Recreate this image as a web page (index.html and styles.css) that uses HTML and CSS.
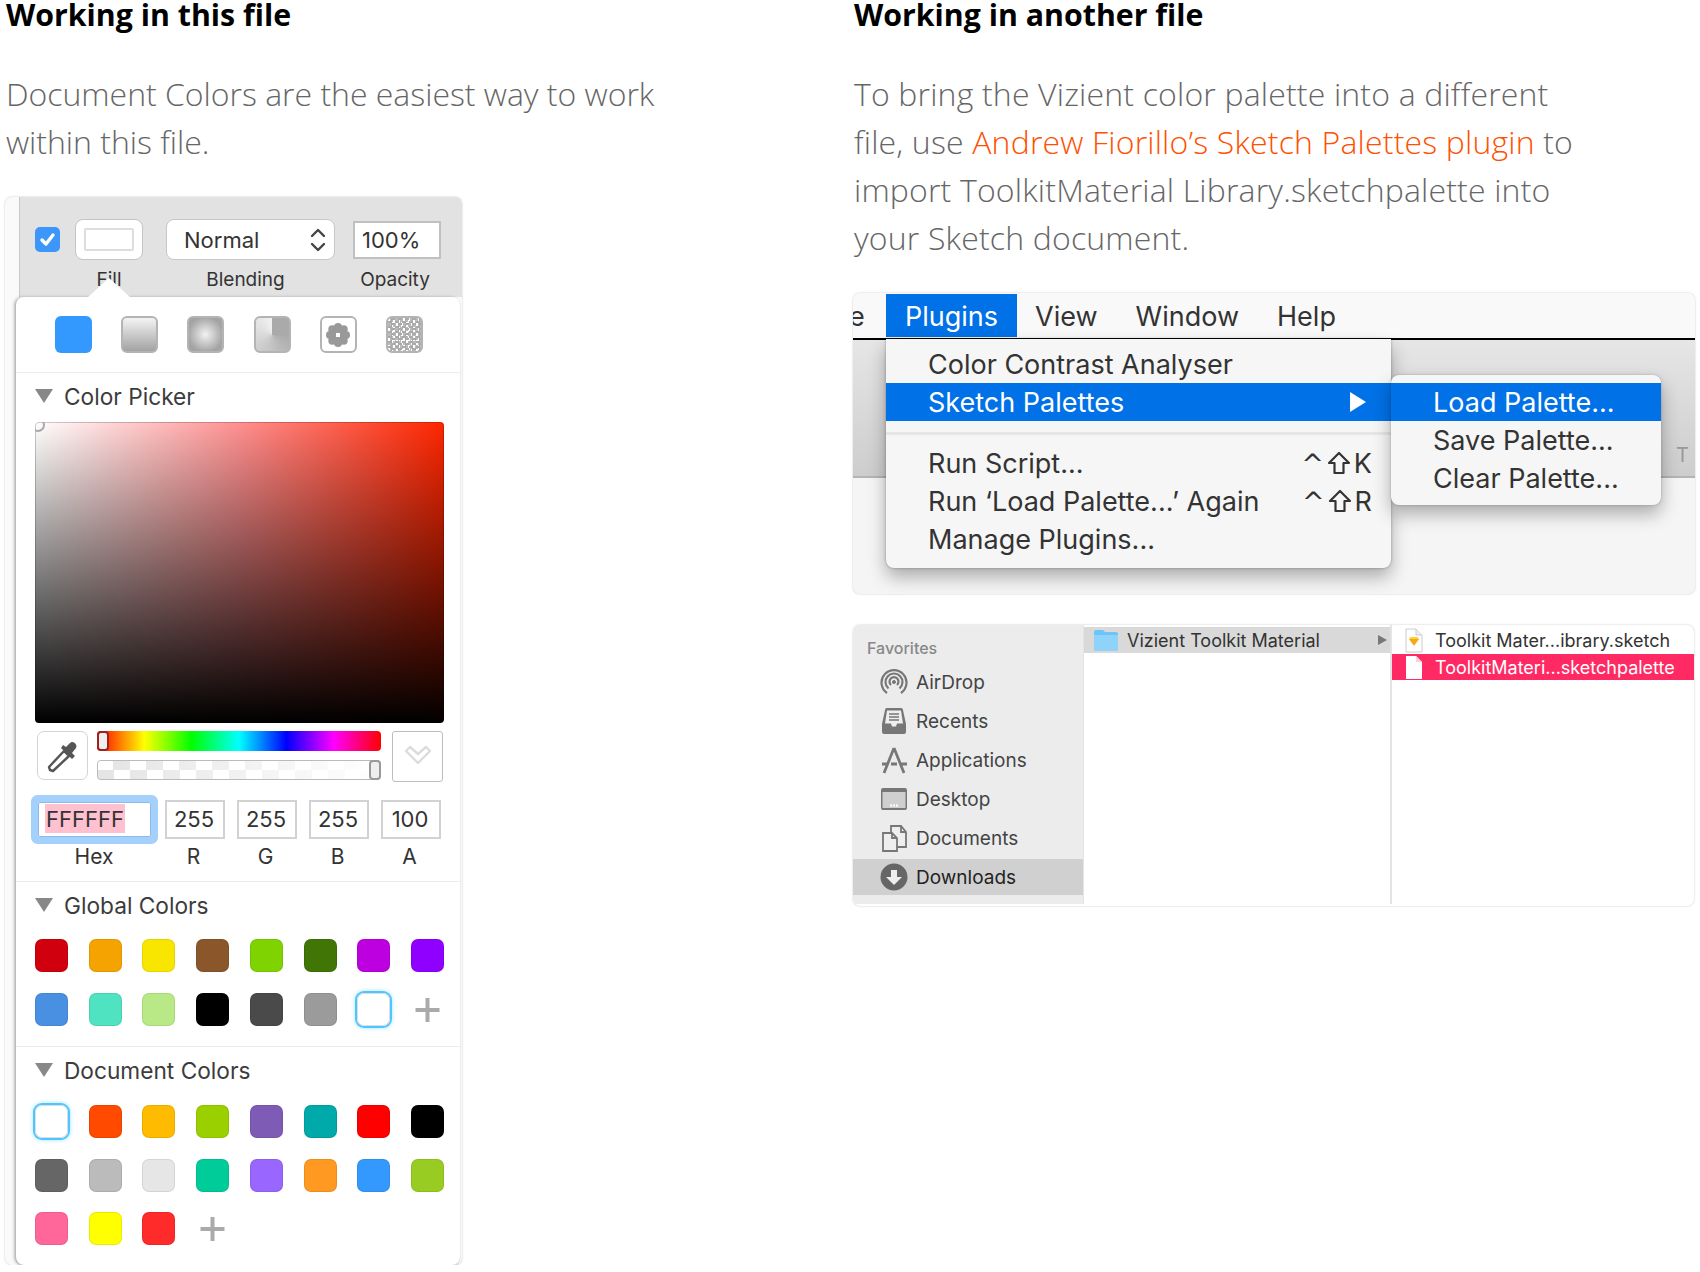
FILE: index.html
```html
<!DOCTYPE html>
<html lang="en">
  <head>
    <meta charset="UTF-8" />
    <title>Working with color palettes</title>
    <link rel="stylesheet" href="styles.css">
  </head>
  <body>
    <div class="page">
      <!-- left column -->
      <section class="col col-left">
        <h2>Working in this file</h2>
        <p>Document Colors are the easiest way to work<br>within this file.</p>

        <div class="inspector">
          <div class="fill-bar">
            <span class="check">
              <svg width="25" height="25" viewBox="0 0 25 25"><path d="M7 13l4 4 7-9" fill="none" stroke="#fff" stroke-width="3.4" stroke-linecap="round" stroke-linejoin="round"/></svg>
            </span>
            <span class="well"><span class="well-inner"></span></span>
            <span class="select">Normal
              <svg width="18" height="26" viewBox="0 0 18 26"><path d="M3 9l6-6 6 6M3 17l6 6 6-6" fill="none" stroke="#444" stroke-width="2.4" stroke-linecap="round" stroke-linejoin="round"/></svg>
            </span>
            <span class="opacity-box">100%</span>
            <span class="bar-label"></span>
            <span class="bar-label label-fill">Fill</span>
            <span class="bar-label label-blend">Blending</span>
            <span class="bar-label label-opacity">Opacity</span>
          </div>

          <div class="popover">
            <div class="fill-types">
              <span class="type type-solid"></span>
              <span class="type type-linear"></span>
              <span class="type type-radial"></span>
              <span class="type type-angular"></span>
              <span class="type type-pattern">
                <svg width="32" height="32" viewBox="0 0 32 32">
                  <g fill="#777" opacity="0.75">
                    <circle cx="16" cy="8" r="4"/><circle cx="16" cy="24" r="4"/><circle cx="8" cy="16" r="4"/><circle cx="24" cy="16" r="4"/>
                    <circle cx="10.300" cy="10.300" r="4"/><circle cx="21.700" cy="10.300" r="4"/><circle cx="10.300" cy="21.700" r="4"/><circle cx="21.700" cy="21.700" r="4"/>
                    <circle cx="16" cy="16" r="6"/>
                  </g>
                  <rect x="14" y="14" width="4" height="4" fill="#fff"/>
                </svg>
              </span>
              <span class="type type-noise"></span>
            </div>

            <div class="panel-section picker">
              <div class="section-head head-tight"><i class="tri"></i>Color Picker</div>
              <div class="sat-box"><i class="sat-handle"></i></div>
              <div class="slider-row">
                <span class="tool-btn">
                  <svg width="38" height="38" viewBox="0 0 38 38">
                    <path d="M6 33l-1-3 15-16 5 5-16 15z" fill="#fff" stroke="#555" stroke-width="2.4" stroke-linejoin="round"/>
                    <path d="M17 11l11 11 3-3-3-3 4-5c2-3-3-8-6-5l-4 4-3-2z" fill="#555"/>
                  </svg>
                </span>
                <div class="sliders">
                  <div class="slider hue"><i class="knob knob-left"></i></div>
                  <div class="slider alpha"><i class="knob knob-right"></i></div>
                </div>
                <span class="tool-btn tool-square">
                  <svg width="30" height="22" viewBox="0 0 30 22"><path d="M3 7l4-4 8 7 8-7 4 4-12 12z" fill="#fff" stroke="#dcdcdc" stroke-width="2.4" stroke-linejoin="round"/></svg>
                </span>
              </div>
              <div class="values">
                <span class="value value-hex"><b>FFFFFF</b></span>
                <span class="value">255</span>
                <span class="value">255</span>
                <span class="value">255</span>
                <span class="value">100</span>
                <span class="value-label">Hex</span>
                <span class="value-label">R</span>
                <span class="value-label">G</span>
                <span class="value-label">B</span>
                <span class="value-label">A</span>
              </div>
            </div>

            <div class="panel-section">
              <div class="section-head"><i class="tri"></i>Global Colors</div>
              <div class="swatches">
                <i class="swatch" style="background:#d0000f"></i>
                <i class="swatch" style="background:#f5a300"></i>
                <i class="swatch" style="background:#f8e600"></i>
                <i class="swatch" style="background:#8b572a"></i>
                <i class="swatch" style="background:#7ed300"></i>
                <i class="swatch" style="background:#417505"></i>
                <i class="swatch" style="background:#bd00e0"></i>
                <i class="swatch" style="background:#9000fe"></i>
                <i class="swatch" style="background:#4a90e2"></i>
                <i class="swatch" style="background:#50e3c2"></i>
                <i class="swatch" style="background:#b8e986"></i>
                <i class="swatch" style="background:#000"></i>
                <i class="swatch" style="background:#4a4a4a"></i>
                <i class="swatch" style="background:#9b9b9b"></i>
                <i class="swatch swatch-on"></i>
                <svg class="plus" width="33" height="33" viewBox="0 0 33 33"><path d="M16.5 5v24M4.500 17h24" stroke="#aaa" stroke-width="4"/></svg>
              </div>
            </div>

            <div class="panel-section">
              <div class="section-head head-doc"><i class="tri"></i>Document Colors</div>
              <div class="swatches swatches-doc">
                <i class="swatch swatch-on"></i>
                <i class="swatch" style="background:#ff4a00"></i>
                <i class="swatch" style="background:#ffbb00"></i>
                <i class="swatch" style="background:#9bd000"></i>
                <i class="swatch" style="background:#7e5cb6"></i>
                <i class="swatch" style="background:#00aaaa"></i>
                <i class="swatch" style="background:#ff0000"></i>
                <i class="swatch" style="background:#000"></i>
                <i class="swatch" style="background:#666"></i>
                <i class="swatch" style="background:#bbb"></i>
                <i class="swatch" style="background:#e6e6e6"></i>
                <i class="swatch" style="background:#00cc99"></i>
                <i class="swatch" style="background:#9966ff"></i>
                <i class="swatch" style="background:#ff9922"></i>
                <i class="swatch" style="background:#3399ff"></i>
                <i class="swatch" style="background:#99cc22"></i>
                <i class="swatch" style="background:#ff6699"></i>
                <i class="swatch" style="background:#ffff00"></i>
                <i class="swatch" style="background:#ff2a2a"></i>
                <svg class="plus" width="33" height="33" viewBox="0 0 33 33"><path d="M16.5 5v24M4.500 17h24" stroke="#aaa" stroke-width="4"/></svg>
              </div>
            </div>
          </div>
        </div>
      </section>

      <!-- right column -->
      <section class="col col-right">
        <h2>Working in another file</h2>
        <p>To bring the Vizient color palette into a different<br>file, use <a href="#">Andrew Fiorillo’s Sketch Palettes plugin</a> to<br>import ToolkitMaterial Library.sketchpalette into<br>your Sketch document.</p>

        <div class="menu-shot">
          <div class="menubar">
            <span class="bar-cut">e</span>
            <span class="bar-item bar-active">Plugins</span>
            <span class="bar-item">View</span>
            <span class="bar-item">Window</span>
            <span class="bar-item">Help</span>
          </div>
          <div class="toolbar-bg"><span class="tool-t">T</span></div>

          <div class="menu">
            <div class="menu-item">Color Contrast Analyser</div>
            <div class="menu-item menu-on">Sketch Palettes <i class="menu-arrow"></i></div>
            <div class="menu-sep"></div>
            <div class="menu-item">Run Script...
              <span class="keys"><em>^</em><svg width="24" height="24" viewBox="0 0 24 24"><path d="M12 2L2 12h5.500v10h9V12H22z" fill="none" stroke="#333" stroke-width="2.2" stroke-linejoin="round"/></svg>K</span>
            </div>
            <div class="menu-item">Run ‘Load Palette...’ Again
              <span class="keys"><em>^</em><svg width="24" height="24" viewBox="0 0 24 24"><path d="M12 2L2 12h5.500v10h9V12H22z" fill="none" stroke="#333" stroke-width="2.2" stroke-linejoin="round"/></svg>R</span>
            </div>
            <div class="menu-item">Manage Plugins...</div>

            <div class="submenu">
              <div class="menu-item menu-on">Load Palette...</div>
              <div class="menu-item">Save Palette...</div>
              <div class="menu-item">Clear Palette...</div>
            </div>
          </div>
        </div>

        <div class="finder">
          <div class="sidebar">
            <div class="side-title">Favorites</div>
            <div class="side-item">
              <svg width="28" height="28" viewBox="0 0 28 28" fill="none" stroke="#777"><path d="M7 25A12.500 12.500 0 1 1 21 25" stroke-width="2.200"/><path d="M8.500 20.500A8.500 8.500 0 1 1 19.500 20.500" stroke-width="2.200"/><path d="M11 17a4.500 4.500 0 1 1 6 0" stroke-width="2.200"/><circle cx="14" cy="14" r="1.500" fill="#777"/></svg>
              AirDrop
            </div>
            <div class="side-item">
              <svg width="28" height="28" viewBox="0 0 28 28"><path d="M2 25V17l3-14a2 2 0 0 1 2-2h14a2 2 0 0 1 2 2l3 14v8a2 2 0 0 1-2 2H4a2 2 0 0 1-2-2z" fill="#777"/><path d="M7 3.500h14l2 13h-6l-1 3h-4l-1-3H5z" fill="#eee"/><path d="M9 7h10M9 10h10M9 13h10" stroke="#777" stroke-width="1.400"/></svg>
              Recents
            </div>
            <div class="side-item">
              <svg width="28" height="28" viewBox="0 0 28 28" fill="none" stroke="#777" stroke-width="2.800"><path d="M14 2L4 27M14 2l10 25M2 18h6M11 18h6M20 18h7"/></svg>
              Applications
            </div>
            <div class="side-item">
              <svg width="28" height="28" viewBox="0 0 28 28"><rect x="1" y="3" width="26" height="22" rx="2" fill="#777"/><rect x="2.500" y="7" width="23" height="16" fill="#cfcfcf"/><path d="M10 20.500h2M13 20.500h2M16 20.500h2" stroke="#fff" stroke-width="2.200"/></svg>
              Desktop
            </div>
            <div class="side-item">
              <svg width="28" height="28" viewBox="0 0 28 28" fill="#eee" stroke="#777" stroke-width="1.800"><path d="M11 2h10l5 6v15H11z"/><path d="M21 2v6h5" fill="none"/><path d="M3 9h9l5 5v13H3z"/><path d="M12 9v5h5" fill="none"/></svg>
              Documents
            </div>
            <div class="side-item side-on">
              <svg width="28" height="28" viewBox="0 0 28 28"><circle cx="14" cy="14" r="13.500" fill="#666"/><path d="M11 7h6v7h5l-8 8-8-8h5z" fill="#eee"/></svg>
              Downloads
            </div>
            <div class="side-item side-peek"><i class="peek-icon"></i></div>
          </div>

          <div class="browser browser-one">
            <div class="file-row file-open">
              <svg width="26" height="24" viewBox="0 0 26 24"><path d="M1 4a2 2 0 0 1 2-2h7l2 2h11a2 2 0 0 1 2 2v15a2 2 0 0 1-2 2H3a2 2 0 0 1-2-2z" fill="#6cc4f8"/><path d="M1 7h24v14a2 2 0 0 1-2 2H3a2 2 0 0 1-2-2z" fill="#8fd3fb"/></svg>
              <span class="file-name">Vizient Toolkit Material</span>
              <i class="file-arrow"></i>
            </div>
          </div>

          <div class="browser">
            <div class="file-row">
              <svg width="18" height="25" viewBox="0 0 18 25"><path d="M1 1h10l6 6v17H1z" fill="#fff" stroke="#ccc"/><path d="M11 1v6h6" fill="#eee" stroke="#ccc"/><path d="M4 11h10l-5 7z" fill="#f9a71a"/><path d="M4 11h10l-1.500-2h-7z" fill="#fdd231"/></svg>
              <span class="file-name">Toolkit Mater...ibrary.sketch</span>
            </div>
            <div class="file-row file-selected">
              <svg width="18" height="25" viewBox="0 0 18 25"><path d="M1 1h10l6 6v17H1z" fill="#fff"/><path d="M11 1v6h6z" fill="#ffd0dc"/></svg>
              <span class="file-name">ToolkitMateri...sketchpalette</span>
            </div>
          </div>
        </div>
      </section>
    </div>
  </body>
</html>
```

FILE: styles.css
```css
* {
  box-sizing: border-box;
}

body {
  margin: 0;
  background-color: #fff;
  font-family: "Inter", "Liberation Sans", sans-serif;
  overflow: hidden;
}

.page {
  display: grid;
  grid-template-columns: 848px 842px;
  padding-left: 5px;
}

h2 {
  margin: 0;
  font-family: "Open Sans", sans-serif;
  font-size: 30.300px;
  font-weight: 700;
  line-height: 30px;
  color: #000;
}

.col p {
  margin: 40px 0 31px;
  font-family: "Open Sans", sans-serif;
  font-size: 32px;
  font-weight: 300;
  letter-spacing: 0.17px;
  line-height: 48px;
  color: #666;
}

.col-left p {
  letter-spacing: -0.02px;
}

.col p a {
  color: #ff5000;
  text-decoration: none;
}

.col-left h2,
.col-left p {
  padding-left: 1px;
}

.col-right h2,
.col-right p {
  padding-left: 1px;
}

/* fill inspector */
.inspector {
  width: 457px;
  height: 1068px;
  border-radius: 7px;
  background-color: #fafafa;
  box-shadow: 0 0 2px rgba(0, 0, 0, 0.25);
}

.fill-bar {
  display: grid;
  grid-template-columns: 25px 83px 192px 106px;
  grid-template-rows: 43px 36px;
  align-items: center;
  height: 100px;
  margin-left: 14px;
  padding: 21px 0 0 15px;
  border-left: 1px solid #c8c8c8;
  border-radius: 0 7px 0 0;
  background-color: #e2e2e2;
  font-size: 19px;
  color: #333;
}

.check {
  display: block;
  width: 25px;
  height: 25px;
  border-radius: 5px;
  background-color: #3d97fb;
}

.well {
  display: block;
  width: 68px;
  height: 41px;
  margin-left: 15px;
  padding: 8px;
  border: 1px solid #c4c4c4;
  border-radius: 8px;
  background-color: #fff;
}

.well-inner {
  display: block;
  height: 100%;
  border: 2px solid #ddd;
  border-radius: 2px;
}

.select {
  display: flex;
  align-items: center;
  justify-content: space-between;
  width: 169px;
  height: 41px;
  margin-left: 23px;
  padding: 0 7px 0 17px;
  border: 1px solid #c8c8c8;
  border-radius: 8px;
  background-color: #fff;
  font-size: 22px;
}

.opacity-box {
  display: block;
  width: 88px;
  height: 38px;
  margin-left: 18px;
  padding-left: 7px;
  border: 2px solid #c0c0c0;
  background-color: #fff;
  font-size: 22px;
  line-height: 34px;
}

.bar-label {
  display: block;
  text-align: center;
  white-space: nowrap;
}

.label-fill {
  width: 68px;
  margin-left: 15px;
}

.label-blend {
  width: 169px;
  margin-left: 18px;
}

.label-opacity {
  width: 88px;
  margin-left: 16px;
}

.popover {
  position: relative;
  width: 444px;
  height: 968px;
  margin-left: 11px;
  border-radius: 8px;
  background-color: #fff;
  box-shadow: -2px 0 3px rgba(0, 0, 0, 0.25), 0 1px 2px rgba(0, 0, 0, 0.2);
}

.popover::before {
  content: "";
  position: absolute;
  top: -19px;
  left: 72px;
  border-left: 21px solid transparent;
  border-right: 21px solid transparent;
  border-bottom: 19px solid #fff;
}

.fill-types {
  display: flex;
  justify-content: space-between;
  height: 75px;
  padding: 19px 37px 0 39px;
}

.type {
  display: block;
  width: 37px;
  height: 37px;
  border-radius: 6px;
  border: 2px solid #b4b4b4;
}

.type-solid {
  border: none;
  background-color: #3399ff;
}

.type-linear {
  background: linear-gradient(#f4f4f4, #a2a2a2);
}

.type-radial {
  background: radial-gradient(circle, #f2f2f2, #a4a4a4 75%);
}

.type-angular {
  background: conic-gradient(#aaa 0 25%, #aaa 25%, #f2f2f2 100%);
}

.type-pattern {
  display: flex;
  align-items: center;
  justify-content: center;
  background-color: #fff;
}

.type-noise {
  background-color: #fff;
  background-image:
    conic-gradient(#aaa 25%, transparent 0 50%, #aaa 0 75%, transparent 0),
    conic-gradient(#bbb 25%, transparent 0 50%, #bbb 0 75%, transparent 0);
  background-size: 7px 5px, 5px 9px;
}

.panel-section {
  padding-bottom: 20px;
  border-top: 1px solid #ebebeb;
}

.panel-section.picker {
  padding-bottom: 12px;
}

.section-head {
  display: flex;
  align-items: center;
  height: 46px;
  margin-bottom: 11px;
  padding-left: 19px;
  font-size: 22.700px;
  color: #3c3c3c;
}

.head-tight {
  margin-bottom: 3px;
}

.head-doc {
  margin-bottom: 12px;
}

.tri {
  width: 0;
  height: 0;
  margin-right: 11px;
  border-left: 9px solid transparent;
  border-right: 9px solid transparent;
  border-top: 14px solid #888;
}

.sat-box {
  position: relative;
  width: 409px;
  height: 301px;
  margin-left: 19px;
  border-radius: 4px;
  background: linear-gradient(to top, #000, rgba(0, 0, 0, 0)), linear-gradient(to right, #fff, #ff9090 50%, #ff2600);
  box-shadow: inset 0 0 0 1px rgba(0, 0, 0, 0.2);
  overflow: hidden;
}

.sat-handle {
  position: absolute;
  top: -4px;
  left: -4px;
  width: 14px;
  height: 14px;
  border: 2px solid #aaa;
  border-radius: 50%;
}

.slider-row {
  display: flex;
  align-items: flex-start;
  margin: 8px 0 0 21px;
}

.tool-btn {
  display: flex;
  flex: none;
  align-items: center;
  justify-content: center;
  width: 51px;
  height: 49px;
  border: 1px solid #d4d4d4;
  border-radius: 7px;
  background-color: #fff;
}

.tool-square {
  height: 51px;
  margin-left: 11px;
  padding-bottom: 4px;
  border-color: #bdbdbd;
  border-radius: 3px;
}

.sliders {
  display: flex;
  flex-direction: column;
  gap: 9px;
  width: 284px;
  margin-left: 9px;
}

.slider {
  position: relative;
  height: 20px;
  border-radius: 4px;
}

.hue {
  background: linear-gradient(to right, #f00, #ff0 16.66%, #0f0 33.33%, #0ff 50%, #00f 66.66%, #f0f 83.33%, #f00);
}

.alpha {
  background-color: #fff;
  background-image: conic-gradient(#e4e4e4 25%, transparent 0 50%, #e4e4e4 0 75%, transparent 0);
  background-size: 33px 20px;
  box-shadow: inset 0 0 0 1px #bbb;
}

.alpha::after {
  content: "";
  position: absolute;
  inset: 1px;
  background: linear-gradient(to right, rgba(255, 255, 255, 0), #fff);
}

.knob {
  position: absolute;
  z-index: 1;
  top: 0;
  width: 12px;
  height: 20px;
  border-radius: 4px;
  background-color: #eee;
}

.knob-left {
  left: 0;
  border: 2px solid #a02020;
}

.knob-right {
  right: 0;
  border: 2px solid #999;
}

.values {
  display: grid;
  grid-template-columns: 115px 60px 60px 60px 60px;
  grid-template-rows: 39px 30px;
  column-gap: 12px;
  margin: 18px 0 0 22px;
  font-size: 22px;
  color: #333;
}

.value {
  padding-right: 2px;
  border: 2px solid #d2d2d2;
  font-size: 22px;
  line-height: 35px;
  text-align: center;
}

.value-hex {
  align-self: center;
  width: 113px;
  height: 35px;
  padding: 0 0 0 6px;
  border: 1px solid #8fb9e8;
  box-shadow: 0 0 0 7px #a4d0fc;
  border-radius: 2px;
  line-height: 33px;
  text-align: left;
}

.value-hex b {
  display: inline-block;
  height: 29px;
  padding: 0 1px;
  background-color: #ffc0d0;
  font-weight: 400;
  line-height: 30px;
}

.value-label {
  margin-top: 6px;
  padding-right: 3px;
  font-size: 21px;
  line-height: 24px;
  text-align: center;
}

.swatches {
  display: grid;
  grid-template-columns: repeat(8, 33px);
  grid-auto-rows: 33px;
  justify-content: space-between;
  row-gap: 21px;
  width: 409px;
  margin-left: 19px;
}

.swatches-doc {
  row-gap: 20.500px;
}

.swatch {
  display: block;
  border-radius: 7px;
  box-shadow: inset 0 0 0 1px rgba(0, 0, 0, 0.08);
}

.swatch-on {
  background-color: #fff;
  box-shadow: 0 0 0 2px #4cc6ff, 0 0 4px 2px rgba(76, 198, 255, 0.5), inset 0 0 0 1px #ddd;
}

/* plugin menu */
.menu-shot {
  position: relative;
  display: flex;
  flex-direction: column;
  width: 842px;
  height: 301px;
  border-radius: 7px;
  background-color: #f5f5f5;
  box-shadow: 0 0 2px rgba(0, 0, 0, 0.25);
  overflow: hidden;
}

.menubar {
  display: flex;
  height: 47px;
  padding-top: 1px;
  border-bottom: 2px solid #000;
  background-color: #f9f9f9;
  font-size: 27px;
  line-height: 45px;
  color: #333;
}

.bar-cut {
  width: 33px;
  text-indent: -4px;
  overflow: hidden;
}

.bar-item {
  height: 43px;
  padding: 0 19px;
}

.bar-active {
  margin-right: -1px;
  background-color: #0071e6;
  color: #fff;
}

.toolbar-bg {
  display: flex;
  align-items: center;
  justify-content: flex-end;
  height: 138px;
  padding: 93px 6px 0 0;
  border-bottom: 2px solid #b4b4b4;
  background: linear-gradient(#e6e6e6, #cdcdcd);
}

.tool-t {
  font-size: 20px;
  color: #999;
}

.menu {
  position: absolute;
  top: 46px;
  left: 33px;
  width: 505px;
  height: 229px;
  padding: 6px 0 9px;
  border-radius: 0 0 8px 8px;
  background-color: #f6f6f6;
  box-shadow: 0 9px 18px rgba(0, 0, 0, 0.3), 0 0 3px rgba(0, 0, 0, 0.3);
  font-size: 27px;
  color: #333;
}

.menu-item {
  display: flex;
  align-items: center;
  justify-content: space-between;
  height: 38px;
  padding: 0 19px 0 42px;
  white-space: nowrap;
}

.menu-on {
  background-color: #0071e6;
  color: #fff;
}

.menu-arrow {
  margin-right: 6px;
  border-top: 10px solid transparent;
  border-bottom: 10px solid transparent;
  border-left: 16px solid #fff;
}

.menu-sep {
  height: 3px;
  margin: 11px 0 9px;
  background-color: #e6e6e6;
}

.keys {
  display: flex;
  align-items: center;
  gap: 3px;
  font-size: 27px;
}

.keys em {
  font-family: "DejaVu Sans", sans-serif;
  font-size: 27px;
  font-style: normal;
}

.submenu {
  position: absolute;
  top: 36px;
  left: 100%;
  width: 270px;
  height: 130px;
  padding: 8px 0;
  border-radius: 8px;
  background-color: #f6f6f6;
  box-shadow: 0 9px 18px rgba(0, 0, 0, 0.3), 0 0 3px rgba(0, 0, 0, 0.2);
}

/* finder window */
.finder {
  display: flex;
  width: 841px;
  height: 281px;
  margin-top: 31px;
  padding-bottom: 2px;
  border-radius: 7px;
  background-color: #fff;
  box-shadow: 0 0 2px rgba(0, 0, 0, 0.25);
  color: #333;
  overflow: hidden;
}

.sidebar {
  flex: none;
  width: 230px;
  padding-top: 13px;
  background-color: #ececec;
  overflow: hidden;
}

.side-title {
  height: 26px;
  padding-left: 14px;
  font-size: 16px;
  font-weight: 500;
  line-height: 20px;
  color: #888;
}

.side-item {
  display: flex;
  align-items: center;
  gap: 8px;
  height: 36px;
  margin-bottom: 3px;
  padding-left: 27px;
  font-size: 19px;
  color: #444;
}

.side-on {
  background-color: #d0d0d0;
  color: #222;
}

.peek-icon {
  display: block;
  width: 26px;
  height: 16px;
  border-top: 2px solid #777;
}

.browser {
  flex: 1;
  padding-top: 2px;
}

.browser-one {
  flex: none;
  width: 309px;
  border-left: 1px solid #e4e4e4;
  border-right: 2px solid #e4e4e4;
}

.file-row {
  display: flex;
  align-items: center;
  height: 26px;
  margin-bottom: 1px;
  padding-left: 13px;
  font-size: 18px;
  white-space: nowrap;
}

.file-row .file-name {
  margin-left: 12px;
}

.file-open {
  padding-left: 9px;
  background-color: #d9d9d9;
}

.file-open .file-name {
  margin-left: 8px;
}

.file-arrow {
  margin-left: auto;
  margin-right: 3px;
  border-top: 5px solid transparent;
  border-bottom: 5px solid transparent;
  border-left: 9px solid #777;
}

.file-selected {
  background-color: #ff2a63;
  color: #fff;
}
```
